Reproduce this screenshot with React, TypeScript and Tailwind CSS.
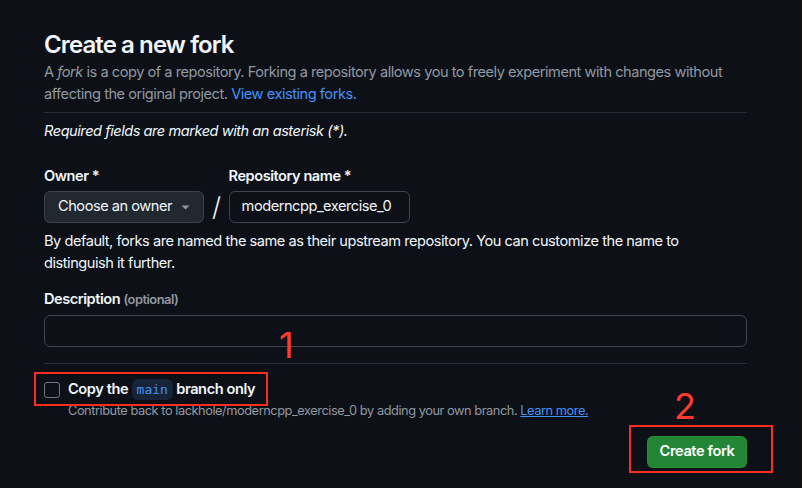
import React from 'react';

export default function App() {
  return (
    <div
      className="relative w-[802px] h-[488px] overflow-hidden bg-[#0d1117] text-[#f0f6fc]"
      style={{ fontFamily: 'Inter, "Liberation Sans", sans-serif' }}
    >
      <div className="ml-[44px] w-[703px] pt-[30px]">
        <h1 className="text-[24px] leading-[30px] font-semibold tracking-[-0.9px]">Create a new fork</h1>
        <p className="mt-[1px] text-[14.6px] leading-[22px] tracking-[-0.47px] text-[#9198a1]">
          A <em>fork</em> is a copy of a repository. Forking a repository allows you to freely experiment with changes without
          affecting the original project. <span className="text-[#4493f8]">View existing forks.</span>
        </p>
        <div className="mt-[7px] h-px bg-[#262c36]" />

        <p className="mt-[7px] text-[14.6px] leading-[22px] tracking-[-0.47px] italic">
          Required fields are marked with an asterisk (*).
        </p>

        <div className="mt-[23px] flex items-start text-[14.6px] tracking-[-0.47px]">
          <div>
            <div className="leading-[22px] font-semibold">Owner *</div>
            <button className="mt-[4px] flex h-[32px] w-[160px] items-center justify-between rounded-[6px] border border-[#3d444d] bg-[#212830] pl-[13px] pr-[13px] text-[#f0f6fc]">
              <span>Choose an owner</span>
              <svg width="9" height="5" viewBox="0 0 9 5">
                <path d="M0.5 0.5 L4.5 4.5 L8.5 0.5 Z" fill="#9198a1" />
              </svg>
            </button>
          </div>
          <div className="mx-[8px] mt-[26px] text-[26px] leading-[32px] font-light text-[#f0f6fc]">/</div>
          <div>
            <div className="leading-[22px] font-semibold">Repository name *</div>
            <div className="mt-[4px] flex h-[32px] w-[181px] items-center rounded-[6px] border border-[#3d444d] bg-[#0d1117] px-[12px]">
              moderncpp_exercise_0
            </div>
          </div>
        </div>

        <p className="mt-[7px] text-[14.6px] leading-[22px] tracking-[-0.47px]">
          By default, forks are named the same as their upstream repository. You can customize the name to
          <br />
          distinguish it further.
        </p>

        <div className="mt-[14px] text-[14.6px] leading-[22px] tracking-[-0.47px] font-semibold">
          Description <span className="text-[12.8px] text-[#9198a1]">(optional)</span>
        </div>
        <div className="mt-[4px] h-[32px] rounded-[6px] border border-[#3d444d] bg-[#0d1117]" />

        <div className="mt-[16px] h-px bg-[#262c36]" />

        <label className="mt-[14px] flex h-[24px] items-center">
          <span className="h-[16px] w-[16px] rounded-[3px] border border-[#6e7681] bg-[#0d1117]" />
          <span className="ml-[8px] text-[14.6px] tracking-[-0.4px] font-semibold">
            Copy the{' '}
            <code
              className="rounded-[6px] bg-[#172338] px-[5px] py-[3px] text-[13px] tracking-normal font-normal text-[#4493f8]"
              style={{ fontFamily: '"DejaVu Sans Mono", "Liberation Mono", monospace' }}
            >
              main
            </code>{' '}
            branch only
          </span>
        </label>
        <p className="pl-[24px] text-[12.8px] leading-[18px] tracking-[-0.45px] text-[#9198a1]">
          Contribute back to lackhole/moderncpp_exercise_0 by adding your own branch.{' '}
          <span className="text-[#4493f8] underline">Learn more.</span>
        </p>

        <div className="mt-[16px] flex justify-end">
          <button className="h-[32px] w-[100px] rounded-[6px] border border-[#2ea043]/40 bg-[#238636] text-[14.6px] tracking-[-0.4px] font-semibold text-white">
            Create fork
          </button>
        </div>
      </div>

      {/* annotations */}
      <div className="absolute left-[34px] top-[372px] h-[34px] w-[234px] border-2 border-[#ff2d20]" />
      <div className="absolute left-[279px] top-[327px] text-[36px] leading-[36px] text-[#ff3b30]">1</div>
      <div className="absolute left-[629px] top-[425px] h-[48px] w-[144px] border-2 border-[#ff2d20]" />
      <div className="absolute left-[674px] top-[388px] text-[36px] leading-[36px] text-[#ff3b30]">2</div>
    </div>
  );
}
